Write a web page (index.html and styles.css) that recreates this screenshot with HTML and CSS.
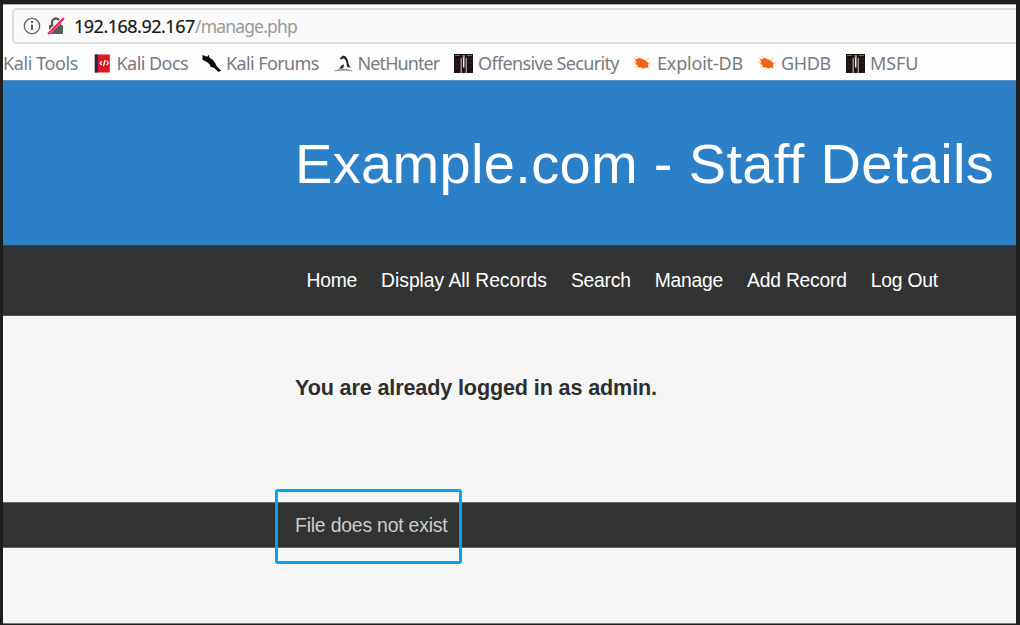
FILE: index.html
```html
<!DOCTYPE html>
<html lang="en">
<head>
<meta charset="utf-8">
<title>Example.com - Staff Details</title>
<link rel="stylesheet" href="styles.css">
</head>
<body>
<svg class="defs" width="0" height="0" aria-hidden="true">
  <symbol id="bug" viewBox="0 0 18 16">
    <path d="M1 3l4 2M3 1l4 3M8 2l2 3M13 5l3-2M14 8l4 0M13 11l3 3M9 12l-1 2M6 11l-4 1M4 8L0 7" stroke="#fabb94" stroke-width="1" fill="none"/>
    <path d="M1.8 4.8L4.5 4 7 2.7 8.8 4.2 11.2 4.4 14 6.8 16 9 14.8 10 15.5 12.8 12.5 12.4 10.5 13.6 8 12.2 5 12.4 4.8 10.2 2.2 9 3.7 7.3z" fill="#ee6414"/>
  </symbol>
  <symbol id="figure" viewBox="0 0 19 19">
    <path d="M0 0h19v19H0z" fill="#1c1112"/>
    <path d="M1 6h5M1 10h5M1 14h5M14 5h4M14 9h4M14 13h4" stroke="#43201f"/>
    <path d="M1 1.5h5M13 1.5h5" stroke="#716566"/>
    <path d="M7.2 4v15M12.2 4v15" stroke="#b5b1ac" stroke-width="1.2"/>
    <path d="M8.4 1h2.6v3H8.4z" fill="#857e7b"/>
    <path d="M9.7 3.5v10" stroke="#eeeae5" stroke-width="1.5"/>
  </symbol>
</svg>
<div class="window">
  <div class="toolbar">
    <div class="address">
      <svg class="info" viewBox="0 0 18 18"><circle cx="9" cy="9" r="7.7" fill="none" stroke="#666" stroke-width="1.3"/><path d="M9 7.7v5.2" stroke="#555" stroke-width="1.9"/><circle cx="9" cy="5" r="1.15" fill="#555"/></svg>
      <svg class="lock" viewBox="0 0 18 18"><path d="M5 9V5.5a4 4 0 0 1 8 0V9" fill="none" stroke="#5c5c5c" stroke-width="2.4"/><rect x="2" y="8" width="14" height="9" rx="1" fill="#5c5c5c"/><path d="M1 16.5L16.5 1" stroke="#fafafa" stroke-width="3.4"/><path d="M1 16.9L16.9 1" stroke="#f01c4e" stroke-width="2.1"/></svg>
      <span class="url"><span class="host">192.168.92.167</span><span class="path">/manage.php</span></span>
    </div>
  </div>
  <div class="bookmarks">
    <span class="mark mark-tools">Kali Tools</span>
    <span class="mark mark-docs"><svg class="fav" viewBox="0 0 17 19"><path d="M.8 .5h15v18H.8z" fill="#d71920"/><path d="M.8 .5h3v18h-3z" fill="#242553"/><path d="M7.8 7L6.1 9.2l1.7 2M12.6 6.7l1.7 2.3-1.7 2M11.1 6l-1.6 6.2" fill="none" stroke="#fff" stroke-width="1.2"/></svg><span>Kali Docs</span></span>
    <span class="mark mark-forums"><svg class="fav" viewBox="0 0 20 20"><path d="M.5 1l5 2L7.2.8 8 4l3 1.8 3 4 1.5 3 5 5-3.5 1-4-4-4-1.5-1-2.5-3-2.5L.5 6z" fill="#0b0b0b"/></svg><span>Kali Forums</span></span>
    <span class="mark mark-hunter"><svg class="fav" viewBox="0 0 18 18"><path d="M.5 16Q8 12.5 17.5 16Q8 14.7.5 16z" fill="#777" stroke="#999" stroke-width=".5"/><path d="M5 14l2-3 2.5-1.2-.8 3.6zM5.3 4.4L8.5 1.5l2.5.8 2.2 3.3.4 3.4 2 4-3.1-.8-1.2-6-2-2.1-2.7 1.2z" fill="#222"/></svg><span>NetHunter</span></span>
    <span class="mark mark-offsec"><svg class="fav"><use href="#figure"/></svg><span>Offensive Security</span></span>
    <span class="mark mark-exploit"><svg class="fav"><use href="#bug"/></svg><span>Exploit-DB</span></span>
    <span class="mark mark-ghdb"><svg class="fav"><use href="#bug"/></svg><span>GHDB</span></span>
    <span class="mark mark-msfu"><svg class="fav"><use href="#figure"/></svg><span>MSFU</span></span>
  </div>
  <header class="banner"><h1>Example.com - Staff Details</h1></header>
  <nav class="menu"><a>Home</a><a class="wide">Display All Records</a><a>Search</a><a>Manage</a><a>Add Record</a><a>Log Out</a></nav>
  <main class="content"><h2>You are already logged in as admin.</h2></main>
  <footer class="footer"><span class="message">File does not exist<i class="highlight"></i></span></footer>
</div>
</body>
</html>
```
FILE: styles.css
```css
* { box-sizing: border-box; }
body {
  margin: 0;
  width: 1020px;
  height: 625px;
  overflow: hidden;
  background: #201f1e;
  padding: 4px 4px 1px 3px;
  font-family: "Liberation Sans", Arial, sans-serif;
}
.defs { position: absolute; }
.window {
  height: 620px;
  overflow: hidden;
  background: #f6f6f6;
  border-top: 1px solid #b5b5b4;
  border-bottom: 1px solid #777;
}
.toolbar {
  height: 41px;
  padding: 3px 0 0 9px;
  background: #fdfdfd;
}
.address {
  display: flex;
  align-items: center;
  height: 36px;
  border: 2px solid #dedede;
  border-right: 0;
  border-radius: 5px 0 0 5px;
  background: #fafafa;
  padding-left: 9px;
}
.info { width: 18px; height: 18px; margin-right: 6px; }
.lock { width: 18px; height: 18px; margin-right: 9px; }
.url {
  font: 18px/30px "Noto Sans", sans-serif;
  white-space: nowrap;
  display: flex;
}
.host { color: #171717; width: 121px; letter-spacing: -.5px; -webkit-text-stroke: .2px #171717; }
.path { color: #999; font-size: 17.5px; letter-spacing: -.83px; }
.bookmarks {
  display: flex;
  align-items: center;
  height: 34px;
  background: #fdfdfd;
  font: 18px/34px "Noto Sans", sans-serif;
  color: #777b82;
  letter-spacing: -.4px;
  white-space: nowrap;
}
.mark { display: flex; align-items: center; flex: none; }
.fav { width: 19px; height: 19px; flex: none; margin-right: 5px; }
.mark-tools { width: 90px; }
.mark-docs { width: 109px; letter-spacing: -.55px; }
.mark-forums { width: 132px; letter-spacing: -.6px; }
.mark-hunter { width: 120px; letter-spacing: -.9px; }
.mark-offsec { width: 179px; letter-spacing: -.65px; }
.mark-exploit { width: 125px; letter-spacing: -.2px; }
.mark-ghdb { width: 88px; }
.mark-msfu { letter-spacing: -.1px; }
.mark-docs .fav, .mark-hunter .fav { margin-right: 4.5px; }
.mark-exploit .fav, .mark-ghdb .fav { width: 18px; height: 16px; }
.mark-exploit .fav { margin-right: 6px; }
.banner {
  height: 165px;
  background: #2c80c8;
  border-top: 1px solid #5d91bd;
  padding-left: 292px;
}
h1 {
  margin: 0;
  font-size: 56px;
  font-weight: 400;
  line-height: 165px;
  letter-spacing: .34px;
  color: #fff;
  white-space: nowrap;
}
.menu {
  display: flex;
  gap: 24px;
  height: 71px;
  padding-left: 303.5px;
  border-top: 1px solid #2f4558;
  border-bottom: 1px solid #555;
  background: #333;
  color: #fff;
  font-size: 19.3px;
  letter-spacing: -.22px;
  line-height: 70px;
  white-space: nowrap;
}
.wide { letter-spacing: -.01px; }
.content { height: 186px; padding: 59px 0 0 292px; }
h2 { margin: 0; font-size: 21.6px; letter-spacing: -.14px; line-height: 26px; color: #2e2e2e; white-space: nowrap; }
.footer {
  height: 46px;
  background: #333;
  border-top: 1px solid #666;
  border-bottom: 1px solid #666;
  padding-left: 292px;
  font-size: 19.4px;
  letter-spacing: -.2px;
  line-height: 44px;
  color: #ccc;
}
.message { position: relative; display: inline-block; white-space: nowrap; }
.highlight {
  position: absolute;
  left: -20px;
  top: -14px;
  width: 187px;
  height: 75px;
  border: 3px solid #03a5ee;
  border-radius: 3px;
}
```
